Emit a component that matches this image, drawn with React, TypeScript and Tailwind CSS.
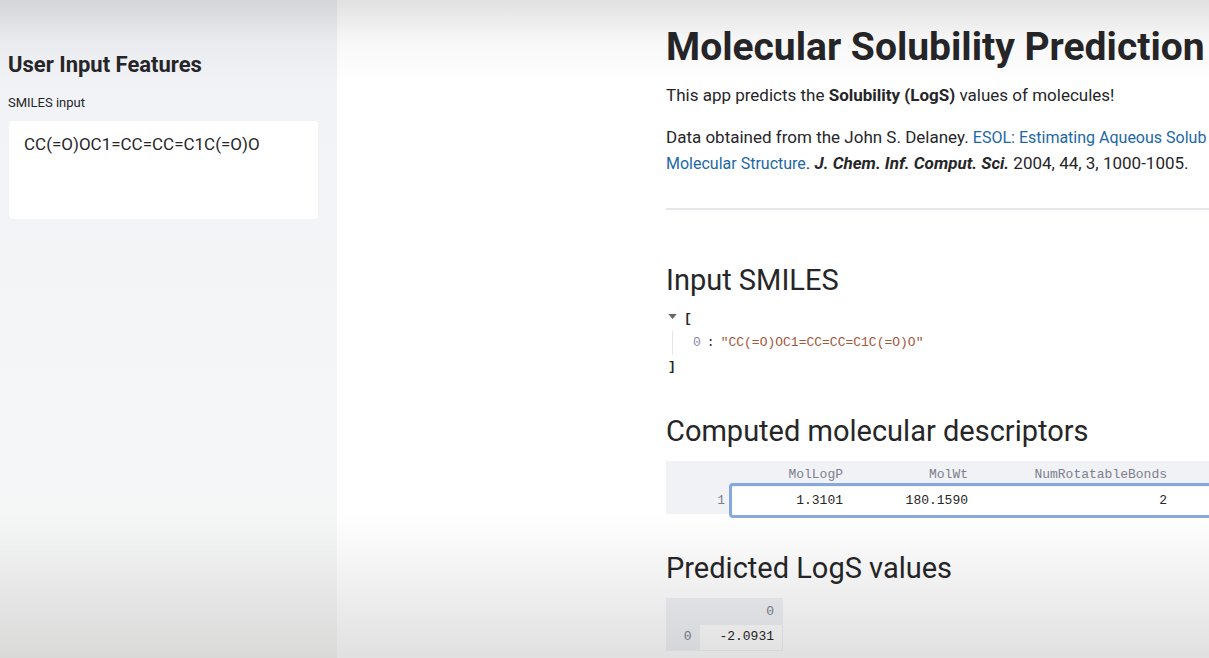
import type { ReactNode } from "react";

function SectionTitle({ children }: { children: ReactNode }) {
  return <h2 className="text-[29px] leading-9 whitespace-nowrap">{children}</h2>;
}

function Sidebar() {
  return (
    <aside className="w-[337px] shrink-0 bg-linear-to-b from-[#f0f2f6] via-[#f3f5f7] to-[#f7f7f6] pl-2 pr-[18px] pt-[53px]">
      <h2 className="text-[22px] leading-6 font-bold">User Input Features</h2>
      <label htmlFor="smiles" className="mt-4 block text-[13px] leading-5">
        SMILES input
      </label>
      <textarea
        id="smiles"
        className="mt-[7px] block h-[100px] w-full resize-none rounded-sm border border-[#f0f3f6] bg-white px-[15px] py-[11px] text-[17px] leading-6 outline-none"
        defaultValue="CC(=O)OC1=CC=CC=C1C(=O)O"
      />
    </aside>
  );
}

function SmilesJson() {
  return (
    <div className="mt-[9px] font-['Liberation_Mono',monospace] text-[13px] leading-6">
      <div className="flex items-center gap-1.5">
        <button type="button" aria-label="Collapse" className="flex h-6 w-3 items-start justify-center pt-[7px]">
          <svg viewBox="0 0 10 6" className="h-[5px] w-[9px] fill-[#666]">
            <path d="M0 0h10L5 6z" />
          </svg>
        </button>
        <span className="font-bold">[</span>
      </div>
      <div className="ml-[6px] flex gap-1.5 border-l border-[#e4e4e8] pl-5">
        <span className="text-[#8a86b0]">0</span>
        <span>:</span>
        <span className="text-[#a4573a]">"CC(=O)OC1=CC=CC=C1C(=O)O"</span>
      </div>
      <div className="pl-[2px] font-bold">]</div>
    </div>
  );
}

const descriptors = [
  { name: "MolLogP", value: "1.3101", width: "w-[120px]" },
  { name: "MolWt", value: "180.1590", width: "w-[125px]" },
  { name: "NumRotatableBonds", value: "2", width: "w-[199px]" },
];

function DescriptorTable() {
  return (
    <div className="mt-3 w-[760px] bg-[#f0f2f6]">
      <table className="relative table-fixed border-collapse text-right font-['Liberation_Mono',monospace] text-[13px] leading-5">
        <thead className="text-[#7c808c]">
          <tr className="h-[26px]">
            <td className="w-[65px]" />
            {descriptors.map((d) => (
              <th key={d.name} scope="col" className={`${d.width} pt-0.5 pr-2 text-right font-normal`}>
                {d.name}
              </th>
            ))}
            <td className="w-[251px]" />
          </tr>
        </thead>
        <tbody>
          <tr className="h-[27px] bg-white">
            <th scope="row" className="bg-[#f0f2f6] pr-1.5 text-right font-normal text-[#7c808c]">
              1
            </th>
            {descriptors.map((d) => (
              <td key={d.name} className="pr-2">
                {d.value}
              </td>
            ))}
            <td>
              <div className="pointer-events-none absolute top-[22px] right-0 -bottom-1 left-[63px] rounded-sm border-3 border-[#86a8dc]" />
            </td>
          </tr>
        </tbody>
      </table>
    </div>
  );
}

function PredictionTable() {
  return (
    <table className="mt-3 border border-[#f0f2f6] bg-[#f0f2f6] text-right font-['Liberation_Mono',monospace] text-[13px] leading-5">
      <thead className="text-[#7c808c]">
        <tr className="h-[26px]">
          <td className="w-[33px]" />
          <th scope="col" className="w-[83px] pr-2 text-right font-normal">
            0
          </th>
        </tr>
      </thead>
      <tbody>
        <tr className="h-[26px]">
          <th scope="row" className="pr-2 text-right font-normal text-[#7c808c]">
            0
          </th>
          <td className="bg-white pr-2">-2.0931</td>
        </tr>
      </tbody>
    </table>
  );
}

export default function App() {
  return (
    <div className="relative flex min-h-screen overflow-hidden bg-white font-['Roboto',sans-serif] text-[#262629]">
      <Sidebar />
      <main className="min-w-0 flex-1 overflow-hidden pt-6 pl-[329px]">
        <div className="w-[760px]">
          <h1 className="text-[39px] leading-[46px] font-bold whitespace-nowrap">
            Molecular Solubility Prediction
          </h1>
          <p className="mt-3 text-[17px] leading-[26px]">
            This app predicts the <strong>Solubility (LogS)</strong> values of molecules!
          </p>
          <p className="mt-4 text-[17px] leading-[26px]">
            Data obtained from the John S. Delaney.{" "}
            <a href="#esol" className="text-base leading-6 text-[#1c68a8]">
              ESOL: Estimating Aqueous Solub
              <br />
              Molecular Structure
            </a>
            . <strong className="italic">J. Chem. Inf. Comput. Sci.</strong> 2004, 44, 3, 1000-1005.
          </p>
          <hr className="mt-8 mb-[52px] border-t-2 border-[#e6e7ea]" />
          <SectionTitle>Input SMILES</SectionTitle>
          <SmilesJson />
          <div className="h-[34px]" />
          <SectionTitle>Computed molecular descriptors</SectionTitle>
          <DescriptorTable />
          <div className="h-9" />
          <SectionTitle>Predicted LogS values</SectionTitle>
          <PredictionTable />
        </div>
      </main>
      <div className="pointer-events-none absolute inset-x-0 top-0 h-[84px] bg-linear-to-b from-black/12 via-black/3 to-transparent" />
      <div className="pointer-events-none absolute inset-x-0 bottom-0 h-[144px] bg-linear-to-t from-black/12 to-transparent" />
    </div>
  );
}
